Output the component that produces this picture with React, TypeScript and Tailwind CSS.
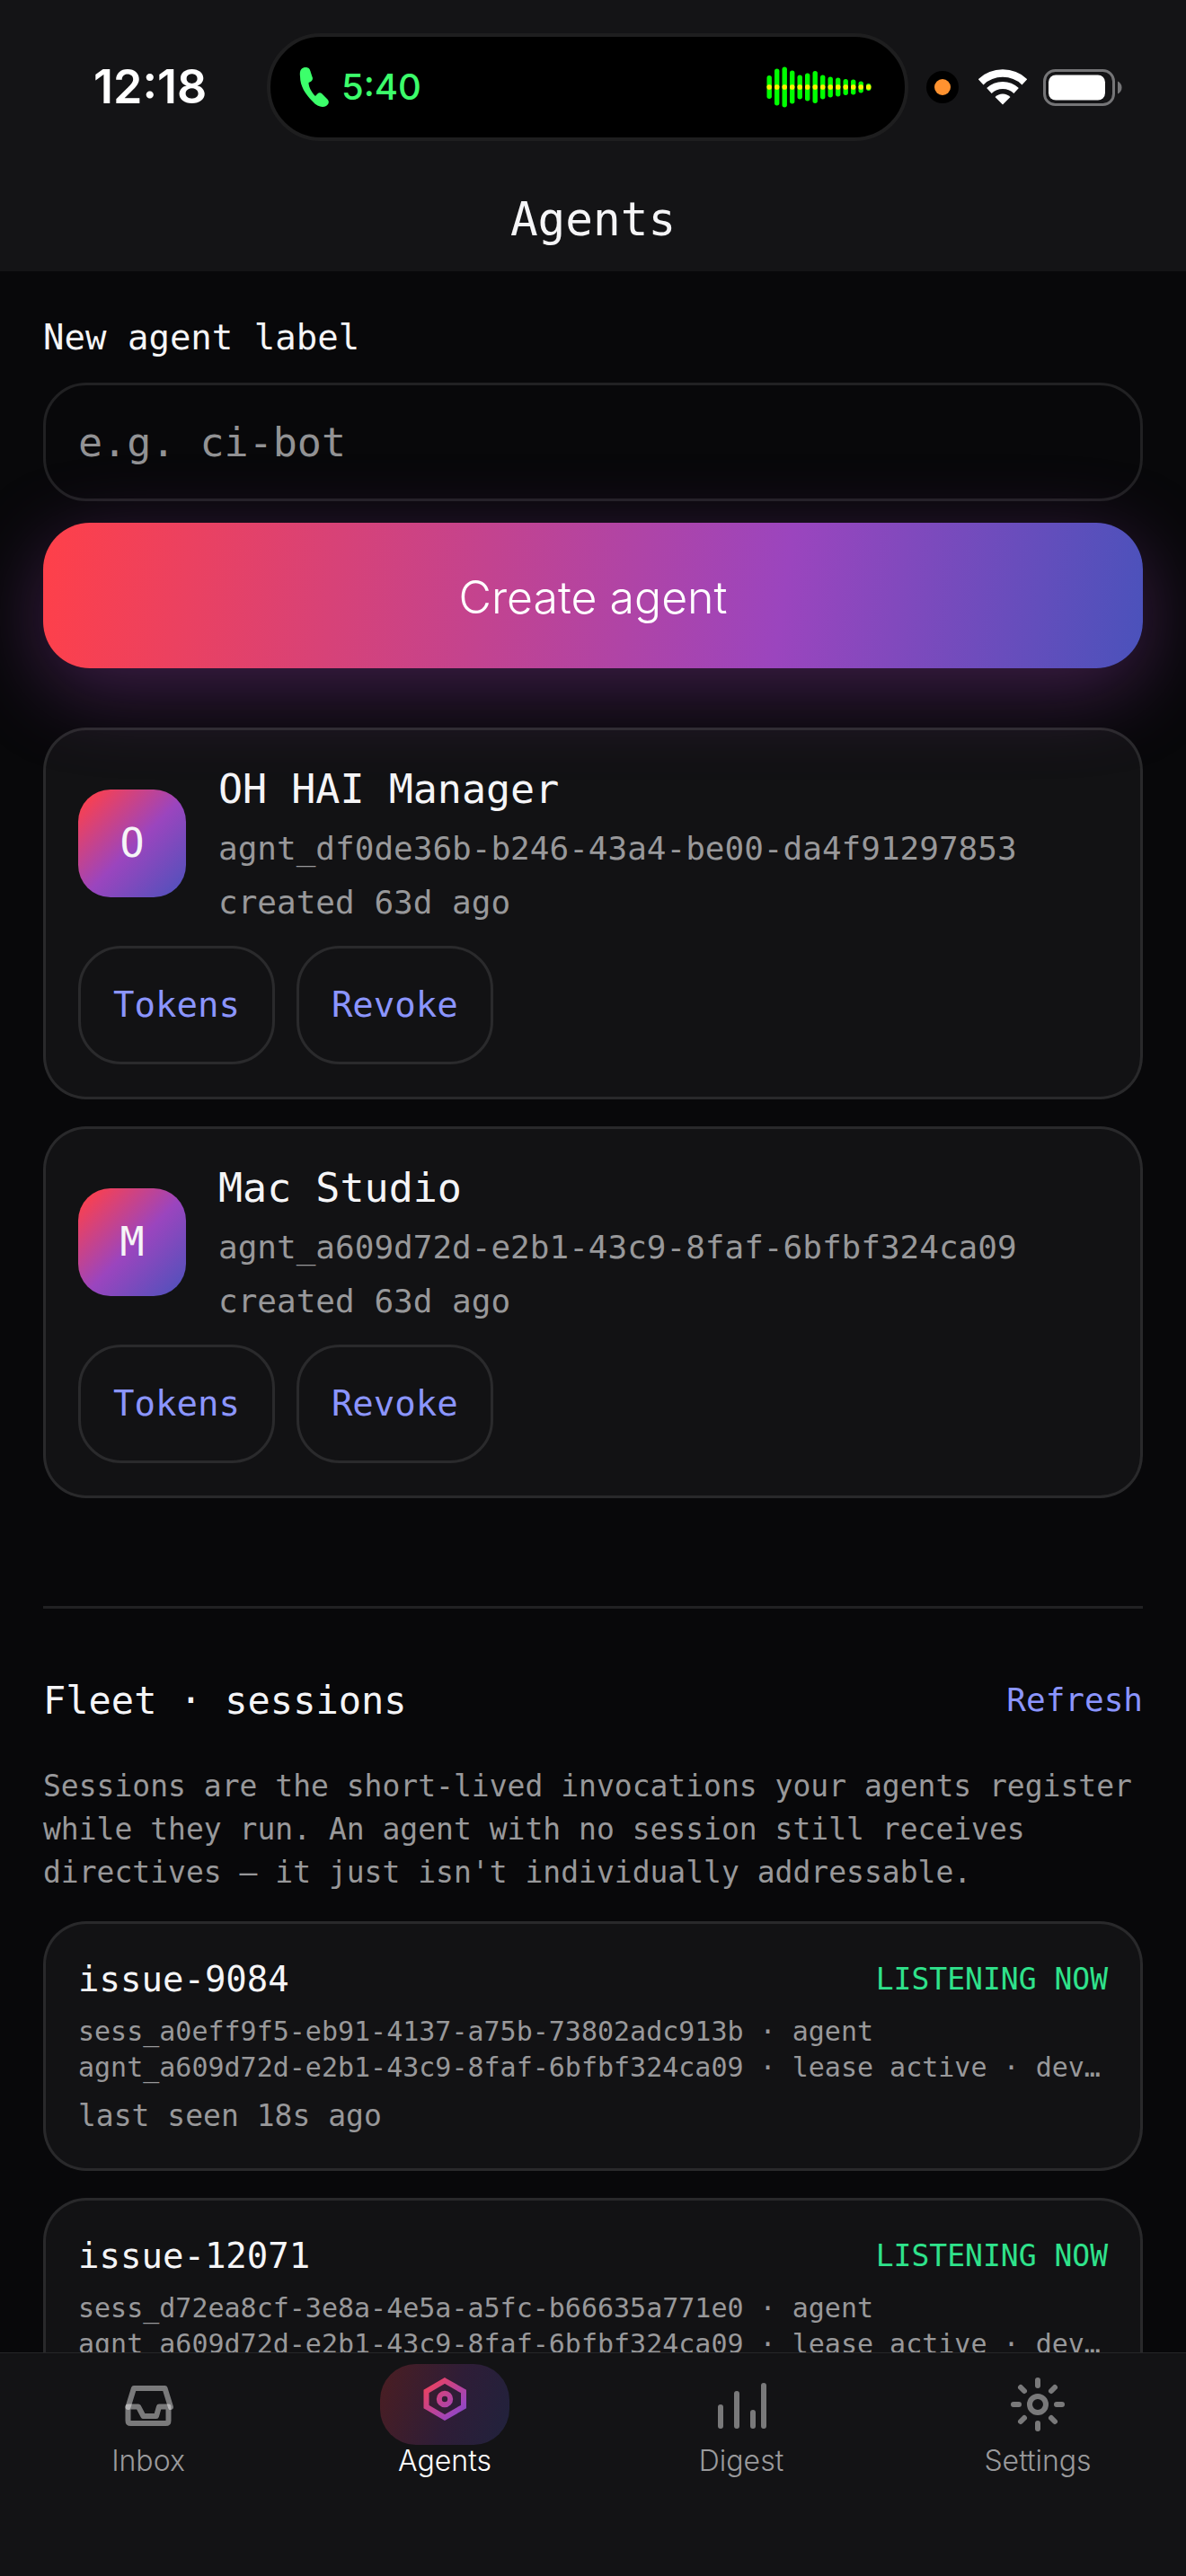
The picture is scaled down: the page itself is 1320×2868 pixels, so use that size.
import { useState } from "react";
import type { ReactNode } from "react";
import clsx from "clsx";

type Agent = { id: string; label: string; created: string };
type Session = { name: string; sessionId: string; agentId: string; lastSeen: string };
type TabId = "inbox" | "agents" | "digest" | "settings";

const AGENTS: Agent[] = [
  {
    id: "agnt_df0de36b-b246-43a4-be00-da4f91297853",
    label: "OH HAI Manager",
    created: "created 63d ago",
  },
  {
    id: "agnt_a609d72d-e2b1-43c9-8faf-6bfbf324ca09",
    label: "Mac Studio",
    created: "created 63d ago",
  },
];

const SESSIONS: Session[] = [
  {
    name: "issue-9084",
    sessionId: "sess_a0eff9f5-eb91-4137-a75b-73802adc913b",
    agentId: "agnt_a609d72d-e2b1-43c9-8faf-6bfbf324ca09",
    lastSeen: "last seen 18s ago",
  },
  {
    name: "issue-12071",
    sessionId: "sess_d72ea8cf-3e8a-4e5a-a5fc-b66635a771e0",
    agentId: "agnt_a609d72d-e2b1-43c9-8faf-6bfbf324ca09",
    lastSeen: "last seen 18s ago",
  },
];

const WAVE_HEIGHTS = [26, 41, 45, 37, 27, 31, 36, 27, 23, 21, 18, 17, 13, 8];

function PhoneIcon() {
  return (
    <svg width="33" height="46" viewBox="0 0 33 46" aria-hidden="true">
      <path
        d="M1 11C0 4 3 1 7 1c4 0 5 2 6 6l2 6c0 3-2 4-4.500 5c0 5 3.500 11 7.500 15c2-2 4-5 7-3l6 6c3 3 2 6-1 8c-4 2-10 1-15-5C7 31 1 22 1 11Z"
        fill="#3cff6b"
      />
    </svg>
  );
}

function Waveform() {
  return (
    <svg width="118" height="48" viewBox="0 0 118 48" aria-hidden="true">
      {WAVE_HEIGHTS.map((h, i) => (
        <g key={i}>
          <rect x={i * 8.5 + 0.5} y={24 - h / 2} width="5.4" height={h} rx="2.7" fill="#00ff00" />
          <rect x={i * 8.5 + 0.5} y="21.3" width="5.4" height="5.4" rx="2" fill="#fff200" />
        </g>
      ))}
    </svg>
  );
}

function WifiIcon() {
  return (
    <svg width="54" height="40" viewBox="0 0 54 40" fill="none" aria-hidden="true">
      <path d="M2.600 14.300A35.500 35.500 0 0 1 51.400 14.300" stroke="#fff" strokeWidth="8.500" />
      <path d="M11.900 24A22 22 0 0 1 42.100 24" stroke="#fff" strokeWidth="8" />
      <path d="M27 39.500L18.500 31A12 12 0 0 1 35.500 31Z" fill="#fff" />
    </svg>
  );
}

function BatteryIcon() {
  return (
    <svg width="88" height="41" viewBox="0 0 88 41" fill="none" aria-hidden="true">
      <rect x="1.500" y="1.500" width="77" height="38" rx="12" stroke="#757577" strokeWidth="3" />
      <rect x="6" y="6.500" width="63" height="28" rx="8" fill="#fff" />
      <path d="M83 13.500c6 2.500 6 11.500 0 14Z" fill="#757577" />
    </svg>
  );
}

function StatusBar() {
  return (
    <div className="flex h-48 items-center pt-0.5">
      <div className="flex-1 pl-26 font-['Inter',sans-serif] text-[52px] leading-[60px] font-semibold text-white">
        12:18
      </div>
      <div className="flex h-30 w-[714px] shrink-0 items-center justify-between rounded-full border-4 border-[#1e1e1f] bg-black pr-9 pl-8">
        <div className="flex items-center gap-3.5">
          <PhoneIcon />
          <span className="font-['Inter',sans-serif] text-[40px] leading-[48px] font-medium text-[#3cff6b]">
            5:40
          </span>
        </div>
        <Waveform />
      </div>
      <div className="flex w-[309px] shrink-0 items-center pl-5">
        <span className="flex size-9 items-center justify-center rounded-full bg-black">
          <span className="size-[18px] rounded-full bg-[#ff9230]" />
        </span>
        <span className="ml-5.5">
          <WifiIcon />
        </span>
        <span className="ml-4.5">
          <BatteryIcon />
        </span>
      </div>
    </div>
  );
}

function AgentCard({ agent }: { agent: Agent }) {
  return (
    <li className="rounded-[48px] border-3 border-white/10 bg-white/[0.045] p-9">
      <div className="flex items-center gap-9">
        <div className="flex size-30 shrink-0 items-center justify-center rounded-[36px] bg-[linear-gradient(135deg,#ff4049_5%,#9b45be_52%,#4a52bb)] text-[45px] text-[#f5f5f7]">
          {agent.label.charAt(0)}
        </div>
        <div className="flex min-w-0 flex-col gap-3">
          <h2 className="text-[45px] leading-[60px] text-[#f5f5f7]">{agent.label}</h2>
          <p className="text-[36px] leading-[48px] text-[#98989a]">{agent.id}</p>
          <p className="text-[36px] leading-[48px] text-[#98989a]">{agent.created}</p>
        </div>
      </div>
      <div className="mt-6 flex gap-6">
        <CardButton>Tokens</CardButton>
        <CardButton>Revoke</CardButton>
      </div>
    </li>
  );
}

function CardButton({ children }: { children: ReactNode }) {
  return (
    <button
      type="button"
      className="h-33 rounded-[48px] border-3 border-white/10 px-9 text-[39px] text-[#8b95ff]"
    >
      {children}
    </button>
  );
}

function SessionCard({ session }: { session: Session }) {
  return (
    <li className="flex flex-col gap-3 rounded-[48px] border-3 border-white/10 bg-white/[0.045] p-9">
      <div className="flex items-center justify-between">
        <h3 className="text-[39px] leading-[52px] text-[#f5f5f7]">{session.name}</h3>
        <span className="text-[33px] leading-[44px] text-[#2fe28b]">LISTENING NOW</span>
      </div>
      <p className="line-clamp-2 text-[30px] leading-[40px] text-[#98989a]">
        {session.sessionId} · agent {session.agentId} · lease active · dev…
      </p>
      <p className="text-[33px] leading-[44px] text-[#98989a]">{session.lastSeen}</p>
    </li>
  );
}

function InboxIcon() {
  return (
    <svg width="72" height="72" viewBox="0 0 72 72" fill="none" aria-hidden="true">
      <g stroke="#ffffff" strokeOpacity="0.44" strokeWidth="6" strokeLinecap="round" strokeLinejoin="round">
        <path d="M13.500 39L20 18H54.500L61 39" />
        <path d="M13.500 38.500H25L30.500 49H45L48 38.500H58.500V54Q58.500 57 55.500 57H16.500Q13.500 57 13.500 54Z" />
      </g>
    </svg>
  );
}

function AgentsIcon() {
  return (
    <svg width="72" height="72" viewBox="0 0 72 72" fill="none" aria-hidden="true">
      <defs>
        <linearGradient id="hex" x1="8" y1="8" x2="64" y2="64" gradientUnits="userSpaceOnUse">
          <stop stopColor="#ff4049" />
          <stop offset="0.68" stopColor="#9b45be" />
          <stop offset="1" stopColor="#4a52bb" />
        </linearGradient>
      </defs>
      <g stroke="url(#hex)" strokeWidth="6">
        <path d="M36 9.500L57 21.500V38.500L36 50.500L15.500 38.500V21.500Z" />
        <circle cx="36" cy="30" r="6.200" />
      </g>
    </svg>
  );
}

function DigestIcon() {
  return (
    <svg width="72" height="72" viewBox="0 0 72 72" fill="none" aria-hidden="true">
      <path
        d="M13 60V39M31 60V24M49 60V45M61 60V15"
        stroke="#79797a"
        strokeWidth="6"
        strokeLinecap="round"
      />
    </svg>
  );
}

function SettingsIcon() {
  return (
    <svg width="72" height="72" viewBox="0 0 72 72" fill="none" aria-hidden="true">
      <g stroke="#79797a" strokeWidth="6" strokeLinecap="round">
        <circle cx="36" cy="36" r="9" />
        <path d="M36 9V15M36 57V63M9 36H15M57 36H63M17 17L21 21M51 51L55 55M17 55L21 51M51 21L55 17" />
      </g>
    </svg>
  );
}

const TABS: { id: TabId; label: string; Icon: () => ReactNode }[] = [
  { id: "inbox", label: "Inbox", Icon: InboxIcon },
  { id: "agents", label: "Agents", Icon: AgentsIcon },
  { id: "digest", label: "Digest", Icon: DigestIcon },
  { id: "settings", label: "Settings", Icon: SettingsIcon },
];

function TabBar() {
  const active: TabId = "agents";
  return (
    <nav className="grid shrink-0 grid-cols-4 border-t border-[#262628] bg-[#131315] pt-3 pb-[110px]">
      {TABS.map(({ id, label, Icon }) => (
        <a
          key={id}
          href={`#${id}`}
          aria-current={id === active ? "page" : undefined}
          className={clsx(
            "flex flex-col items-center font-['Inter',sans-serif] text-[32px] leading-[36px] font-light",
            id === active ? "text-white" : "text-[#9a9a9c]"
          )}
        >
          <span
            className={clsx(
              "flex h-[90px] w-36 items-center justify-center rounded-[40px]",
              id === active &&
                "bg-[linear-gradient(110deg,rgba(255,64,73,0.24),rgba(155,69,190,0.2)_55%,rgba(74,82,187,0.24))]"
            )}
          >
            <Icon />
          </span>
          {label}
        </a>
      ))}
    </nav>
  );
}

export default function App() {
  const [label, setLabel] = useState("");

  return (
    <div className="flex h-screen flex-col bg-[#08080a] font-['DejaVu_Sans_Mono',monospace]">
      <header className="shrink-0 bg-[#141416]">
        <StatusBar />
        <h1 className="flex h-[110px] items-center justify-center pb-1 text-[51px] text-[#f5f5f7]">
          Agents
        </h1>
      </header>

      <main className="min-h-0 flex-1 overflow-y-auto px-12 pt-12 [scrollbar-width:none]">
        <form className="flex flex-col gap-6" onSubmit={(e) => e.preventDefault()}>
          <label htmlFor="agent-label" className="text-[39px] leading-[52px] text-[#f5f5f7]">
            New agent label
          </label>
          <input
            id="agent-label"
            type="text"
            value={label}
            onChange={(e) => setLabel(e.target.value)}
            placeholder="e.g. ci-bot"
            className="h-33 w-full rounded-[48px] border-3 border-white/10 bg-transparent px-9 text-[45px] text-[#f5f5f7] outline-none placeholder:text-[#929294]"
          />
          <button
            type="submit"
            className="h-[162px] rounded-[52px] bg-[linear-gradient(98deg,#ff4049,#9b45be_67%,#4a52bb)] pt-1 font-['Inter',sans-serif] text-[50px] font-light text-white shadow-[0_24px_90px_rgba(160,68,188,0.36)]"
          >
            Create agent
          </button>
        </form>

        <ul className="mt-[66px] flex flex-col gap-[30px]">
          {AGENTS.map((agent) => (
            <AgentCard key={agent.id} agent={agent} />
          ))}
        </ul>

        <section className="mt-30 border-t-3 border-white/10 pt-[54px]">
          <div className="flex h-24 items-center justify-between">
            <h2 className="text-[42px] text-[#f5f5f7]">Fleet · sessions</h2>
            <button type="button" className="text-[36px] text-[#8b95ff]">
              Refresh
            </button>
          </div>
          <p className="mt-6 text-[33px] leading-[48px] text-[#98989a]">
            Sessions are the short-lived invocations your agents register while they run. An agent
            with no session still receives directives — it just isn't individually addressable.
          </p>
          <ul className="mt-[30px] flex flex-col gap-[30px] pb-12">
            {SESSIONS.map((session) => (
              <SessionCard key={session.sessionId} session={session} />
            ))}
          </ul>
        </section>
      </main>

      <TabBar />
    </div>
  );
}
